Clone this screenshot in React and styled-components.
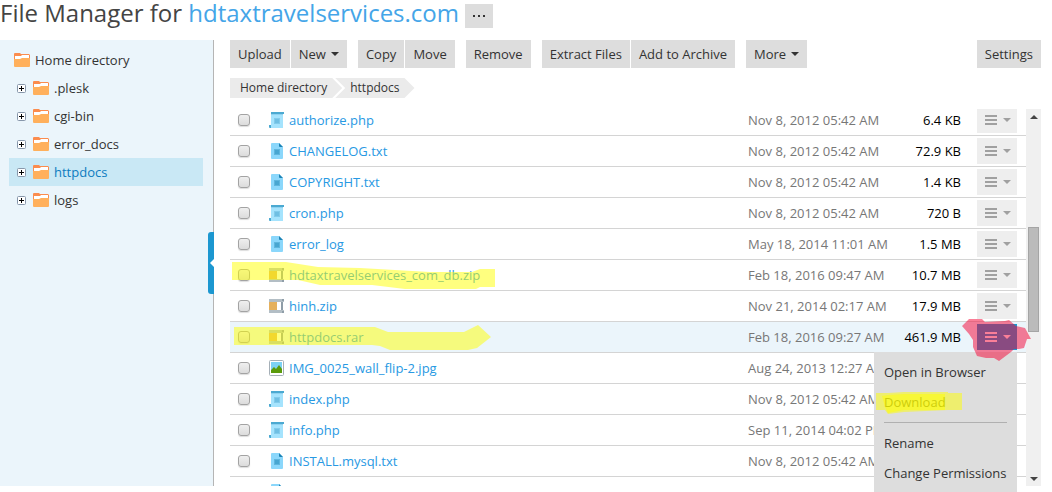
import React from "react";
import styled, { createGlobalStyle } from "styled-components";

const GlobalStyles = createGlobalStyle`
    * {
        box-sizing: border-box;
    }
    body {
        margin: 0;
        overflow: hidden;
        background: #fff;
        color: #333;
        font-family: "Open Sans", "Noto Sans", sans-serif;
        font-size: 13px;
        line-height: 18px;
    }
    button {
        border: 0;
        padding: 0;
        font: inherit;
        color: inherit;
        cursor: pointer;
    }
    a {
        color: inherit;
        text-decoration: none;
    }
    svg {
        display: block;
        flex: none;
    }
`;

const PageStyles = styled.div`
    display: flex;
    flex-direction: column;
    height: 100vh;
    padding-bottom: 6px;
`;

const HeaderStyles = styled.header`
    display: flex;
    align-items: flex-start;
    gap: 6px;
    flex: none;
    height: 40px;
    h1 {
        margin: 0;
        color: #444;
        font-size: 24px;
        font-weight: 400;
        line-height: 26px;
    }
    h1 a {
        color: #44a5e8;
    }
`;

const DotsButton = styled.button`
    display: flex;
    align-items: center;
    justify-content: center;
    width: 28px;
    height: 24px;
    margin-top: 4px;
    background: #ddd;
`;

const ContentStyles = styled.div`
    display: flex;
    flex: 1;
    min-height: 0;
`;

const SidebarStyles = styled.nav`
    position: relative;
    flex: none;
    width: 214px;
    padding: 6px 10px 0 9px;
    border-right: 1px solid #b5b5b5;
    background: #ebf5fb;
    ul {
        margin: 0;
        padding: 0;
        list-style: none;
    }
`;

const TreeItem = styled.li`
    display: flex;
    align-items: center;
    height: 28px;
    padding-left: ${(props) => (props.$root ? "5px" : "8px")};
    background: ${(props) => (props.$active ? "#c9e8f5" : "transparent")};
    color: ${(props) => (props.$active ? "#0d7cc0" : "#333")};
    a {
        display: flex;
        align-items: center;
        gap: 5px;
    }
`;

const ExpandButton = styled.button`
    margin-right: 7px;
    background: none;
`;

const CollapseButton = styled.button`
    position: absolute;
    top: 192px;
    right: -1px;
    display: flex;
    align-items: center;
    justify-content: flex-end;
    width: 6px;
    height: 62px;
    border-radius: 3px 0 0 3px;
    background: #1c97d0;
`;

const MainStyles = styled.main`
    display: flex;
    flex-direction: column;
    flex: 1;
    min-width: 0;
    padding: 0 11px 0 16px;
`;

const ToolbarStyles = styled.div`
    display: flex;
    flex: none;
    gap: 11px;
`;

const ButtonGroup = styled.div`
    display: flex;
    gap: 1px;
    margin-left: ${(props) => (props.$end ? "auto" : "0")};
`;

const ToolButton = styled.button`
    display: flex;
    align-items: center;
    gap: 5px;
    height: 28px;
    padding: 0 8px;
    background: #ddd;
    white-space: nowrap;
`;

const BreadcrumbStyles = styled.ol`
    display: flex;
    flex: none;
    margin: 10px 0 11px;
    padding: 0;
    list-style: none;
    font-size: 12px;
    line-height: 20px;
`;

const Crumb = styled.li`
    height: 20px;
    margin-left: ${(props) => (props.$first ? "0" : "-7px")};
    padding: 0 15px 0 ${(props) => (props.$first ? "10px" : "15px")};
    background: #ebebeb;
    clip-path: ${(props) =>
        props.$first
            ? "polygon(0 0, calc(100% - 10px) 0, 100% 50%, calc(100% - 10px) 100%, 0 100%)"
            : "polygon(0 0, calc(100% - 10px) 0, 100% 50%, calc(100% - 10px) 100%, 0 100%, 10px 50%)"};
`;

const ListArea = styled.div`
    position: relative;
    display: flex;
    flex: 1;
    min-height: 0;
`;

const ListViewport = styled.div`
    flex: 1;
    min-width: 0;
    overflow: hidden;
`;

const FileTable = styled.table`
    width: 100%;
    margin-top: -4px;
    border-collapse: separate;
    border-spacing: 0;
    table-layout: fixed;
    .col-check {
        width: 39px;
    }
    .col-date {
        width: 140px;
    }
    .col-size {
        width: 73px;
    }
    .col-actions {
        width: 65px;
    }
`;

const FileRow = styled.tr`
    background: ${(props) => (props.$active ? "#ebf5fb" : "#fff")};
    td {
        height: 31px;
        padding: 0;
        border-bottom: 1px solid #d4d4d4;
        white-space: nowrap;
    }
    .check {
        position: relative;
        padding-left: 8px;
    }
    .date {
        color: #777;
    }
    .size {
        color: #000;
        text-align: right;
    }
    .actions {
        padding-left: 16px;
    }
`;

const Checkbox = styled.input`
    display: block;
    appearance: none;
    width: 12px;
    height: 12px;
    margin: 0;
    border: 1px solid #a3a3a3;
    border-radius: 3px;
    background: linear-gradient(#efefef, #dcdcdc);
    box-shadow: 0 1px 1px #ddd;
`;

const FileLink = styled.a`
    display: flex;
    align-items: center;
    gap: 4px;
    && {
        color: #2899e3;
    }
`;

const ActionsButton = styled.button`
    display: flex;
    align-items: center;
    gap: 6px;
    width: 40px;
    height: 26px;
    && {
        padding-left: 8px;
        background: ${(props) => (props.$open ? "#1c97d0" : "#eee")};
        color: ${(props) => (props.$open ? "#fff" : "#a0a0a0")};
    }
`;

const ScrollbarStyles = styled.div`
    display: flex;
    flex-direction: column;
    align-items: center;
    flex: none;
    width: 15px;
    padding: 6px 0 5px;
    background: #f0f0f0;
    color: #444;
    .thumb {
        width: 11px;
        height: 105px;
        margin: 108px 0 auto;
        border: 1px solid #a5a5a5;
        background: #bbb;
    }
`;

const MenuStyles = styled.div`
    position: absolute;
    top: 243px;
    right: 24px;
    min-width: 143px;
    padding: 5px 10px;
    background: #ddd;
    hr {
        height: 1px;
        margin: 5px 0;
        border: 0;
        background: #b0b0b0;
    }
`;

const MenuItem = styled.button`
    display: block;
    width: 100%;
    height: 30px;
    background: none;
    text-align: left;
    white-space: nowrap;
`;

const Mark = styled.svg`
    position: absolute;
    top: ${(props) => props.$top};
    left: ${(props) => props.$left};
    z-index: 1;
    pointer-events: none;
`;

const Caret = ({ up }) => (
    <svg width="8" height="4" viewBox="0 0 8 4" fill="currentColor">
        <path d={up ? "M0 4L4 0L8 4Z" : "M0 0H8L4 4Z"} />
    </svg>
);

const BarsIcon = () => (
    <svg width="12" height="10" viewBox="0 0 12 10" fill="currentColor">
        <path d="M0 0H12V2H0ZM0 4H12V6H0ZM0 8H12V10H0Z" />
    </svg>
);

const FolderIcon = () => (
    <svg width="16" height="14" viewBox="0 0 16 14">
        <path d="M0 1Q0 0 1 0H6L7 1H15L16 2V6H0Z" fill="#fb8c4e" />
        <path d="M1 3H7L8 2H15V7H1Z" fill="#fff" />
        <path d="M0 6H6L8 5H16V13Q16 14 15 14H1Q0 14 0 13Z" fill="#ffb05c" />
    </svg>
);

const PlusIcon = () => (
    <svg width="9" height="9" viewBox="0 0 9 9">
        <rect x=".5" y=".5" width="8" height="8" rx="1" fill="#fff" stroke="#8797ab" />
        <path d="M2 4H7V5H2ZM4 2H5V7H4Z" fill="#000" />
    </svg>
);

const fileIcons = {
    script: (
        <>
            <path d="M2 1H14V16H2Z" fill="#a5e3fd" />
            <path d="M2 0H15V2H2Z" fill="#4ba9d1" />
            <path d="M2 2H14V3H2Z" fill="#8fd2f0" />
            <path d="M0 13H2V16H1Q0 16 0 15Z" fill="#4ba9d1" />
            <path d="M5 6H11V12H5Z" fill="#82cbeb" />
            <path d="M6 7H10V11H6Z" fill="#6fbfe3" />
        </>
    ),
    text: (
        <>
            <path d="M2 1Q2 0 3 0H10L14 4V15Q14 16 13 16H3Q2 16 2 15Z" fill="#8bd7fb" />
            <path d="M10 0L14 4H11Q10 4 10 3Z" fill="#1d83b5" />
            <path d="M5 6H11V12H5Z" fill="#5fb6dd" />
            <path d="M6 7H10V11H6Z" fill="#48a6d1" />
        </>
    ),
    archive: (
        <>
            <path d="M0 3H8V13H0Z" fill="#e5b05c" />
            <path d="M8 3H12V13H8Z" fill="#fff" />
            <path d="M12 3H14V13H12Z" fill="#8f9da8" />
            <path d="M0 1H15V4H0ZM0 12H15V15H0Z" fill="#b3bec5" />
            <path d="M13 1H15V3H13ZM13 13H15V15H13Z" fill="#8f9da8" />
        </>
    ),
    image: (
        <>
            <rect x=".5" y=".5" width="14" height="15" rx="1" fill="#fff" stroke="#a5afb7" />
            <path d="M2 2H13V13H2Z" fill="#7dd2f5" />
            <path d="M2 10L5 7L7 9L10 5L13 9V13H2Z" fill="#5b9b0b" />
        </>
    ),
};

const FileIcon = ({ type }) => (
    <svg width="16" height="16" viewBox="0 0 16 16">
        {fileIcons[type]}
    </svg>
);

const folders = [".plesk", "cgi-bin", "error_docs", "httpdocs", "logs"];

const toolGroups = [
    [{ label: "Upload" }, { label: "New", caret: true }],
    [{ label: "Copy" }, { label: "Move" }],
    [{ label: "Remove" }],
    [{ label: "Extract Files" }, { label: "Add to Archive" }],
    [{ label: "More", caret: true }],
];

const files = [
    { name: "authorize.php", type: "script", date: "Nov 8, 2012 05:42 AM", size: "6.4 KB" },
    { name: "CHANGELOG.txt", type: "text", date: "Nov 8, 2012 05:42 AM", size: "72.9 KB" },
    { name: "COPYRIGHT.txt", type: "text", date: "Nov 8, 2012 05:42 AM", size: "1.4 KB" },
    { name: "cron.php", type: "script", date: "Nov 8, 2012 05:42 AM", size: "720 B" },
    { name: "error_log", type: "text", date: "May 18, 2014 11:01 AM", size: "1.5 MB" },
    {
        name: "hdtaxtravelservices_com_db.zip",
        type: "archive",
        date: "Feb 18, 2016 09:47 AM",
        size: "10.7 MB",
        mark: "M2 2H56L88 7L130 8L200 12H242L250 9H265V27H250L246 29H175L142 25H90L68 20H2Z",
    },
    { name: "hinh.zip", type: "archive", date: "Nov 21, 2014 02:17 AM", size: "17.9 MB" },
    {
        name: "httpdocs.rar",
        type: "archive",
        date: "Feb 18, 2016 09:27 AM",
        size: "461.9 MB",
        open: true,
        mark: "M4 5H145L158 10H234L242 6L248 3L261 15L247 26L238 28H160L150 24L142 23H4Z",
    },
    { name: "IMG_0025_wall_flip-2.jpg", type: "image", date: "Aug 24, 2013 12:27 AM", size: "" },
    { name: "index.php", type: "script", date: "Nov 8, 2012 05:42 AM", size: "" },
    { name: "info.php", type: "script", date: "Sep 11, 2014 04:02 PM", size: "" },
    { name: "INSTALL.mysql.txt", type: "text", date: "Nov 8, 2012 05:42 AM", size: "" },
    { name: "", type: "text", date: "", size: "" },
];

const Sidebar = () => (
    <SidebarStyles aria-label="Directories">
        <ul>
            <TreeItem $root>
                <a href="#home">
                    <FolderIcon />
                    Home directory
                </a>
            </TreeItem>
            {folders.map((name) => (
                <TreeItem key={name} $active={name === "httpdocs"}>
                    <ExpandButton aria-label={`Expand ${name}`}>
                        <PlusIcon />
                    </ExpandButton>
                    <a href={`#${name}`}>
                        <FolderIcon />
                        {name}
                    </a>
                </TreeItem>
            ))}
        </ul>
        <CollapseButton aria-label="Collapse">
            <svg width="4" height="8" viewBox="0 0 4 8">
                <path d="M4 0V8L0 4Z" fill="#fff" />
            </svg>
        </CollapseButton>
    </SidebarStyles>
);

const Toolbar = () => (
    <ToolbarStyles>
        {toolGroups.map((group) => (
            <ButtonGroup key={group[0].label}>
                {group.map(({ label, caret }) => (
                    <ToolButton key={label}>
                        {label}
                        {caret && <Caret />}
                    </ToolButton>
                ))}
            </ButtonGroup>
        ))}
        <ButtonGroup $end>
            <ToolButton>Settings</ToolButton>
        </ButtonGroup>
    </ToolbarStyles>
);

const FileList = () => (
    <ListViewport>
        <FileTable>
            <colgroup>
                <col className="col-check" />
                <col />
                <col className="col-date" />
                <col className="col-size" />
                <col className="col-actions" />
            </colgroup>
            <tbody>
                {files.map((file, index) => (
                    <FileRow key={index} $active={file.open}>
                        <td className="check">
                            <Checkbox type="checkbox" aria-label={`Select ${file.name}`} />
                            {file.mark && (
                                <Mark $top="0" $left="0" width="268" height="31">
                                    <path d={file.mark} fill="#ff0" fillOpacity=".5" />
                                </Mark>
                            )}
                        </td>
                        <td>
                            <FileLink href={`#${file.name}`}>
                                <FileIcon type={file.type} />
                                {file.name}
                            </FileLink>
                        </td>
                        <td className="date">{file.date}</td>
                        <td className="size">{file.size}</td>
                        <td className="actions">
                            <ActionsButton $open={file.open} aria-label="Actions">
                                <BarsIcon />
                                <Caret />
                            </ActionsButton>
                        </td>
                    </FileRow>
                ))}
            </tbody>
        </FileTable>
    </ListViewport>
);

const ActionsMenu = () => (
    <MenuStyles>
        <MenuItem>Open in Browser</MenuItem>
        <MenuItem>Download</MenuItem>
        <hr />
        <MenuItem>Rename</MenuItem>
        <MenuItem>Change Permissions</MenuItem>
        <Mark $top="39px" $left="0" width="90" height="26">
            <path d="M2 2H14L30 1H74V2H88V19H74L30 21L14 23L11 19H2Z" fill="#ff0" fillOpacity=".5" />
            <path d="M8 5L14 4L30 3H71V19H30L14 22L11 16Z" fill="#ff0" fillOpacity=".5" />
        </Mark>
        <Mark $top="-34px" $left="88px" width="70" height="46">
            <path
                d="M0 8L7 1H20L23 4L43 3L47 2L54 8L63 10L69 21L65 21L62 30L57 31H52L49 34L37 43L32 40H24L15 38L11 29V22L7 16Z"
                fill="#f50032"
                fillOpacity=".5"
            />
        </Mark>
    </MenuStyles>
);

const App = () => {
    return (
        <PageStyles>
            <GlobalStyles />
            <HeaderStyles>
                <h1>
                    File Manager for <a href="#domain">hdtaxtravelservices.com</a>
                </h1>
                <DotsButton aria-label="More domains">
                    <svg width="12" height="2" viewBox="0 0 12 2" fill="#333">
                        <path d="M0 0H2V2H0ZM5 0H7V2H5ZM10 0H12V2H10Z" />
                    </svg>
                </DotsButton>
            </HeaderStyles>
            <ContentStyles>
                <Sidebar />
                <MainStyles>
                    <Toolbar />
                    <BreadcrumbStyles>
                        <Crumb $first>
                            <a href="#home">Home directory</a>
                        </Crumb>
                        <Crumb>
                            <a href="#httpdocs">httpdocs</a>
                        </Crumb>
                    </BreadcrumbStyles>
                    <ListArea>
                        <FileList />
                        <ScrollbarStyles>
                            <Caret up />
                            <div className="thumb" />
                            <Caret />
                        </ScrollbarStyles>
                        <ActionsMenu />
                    </ListArea>
                </MainStyles>
            </ContentStyles>
        </PageStyles>
    );
};

export default App;
